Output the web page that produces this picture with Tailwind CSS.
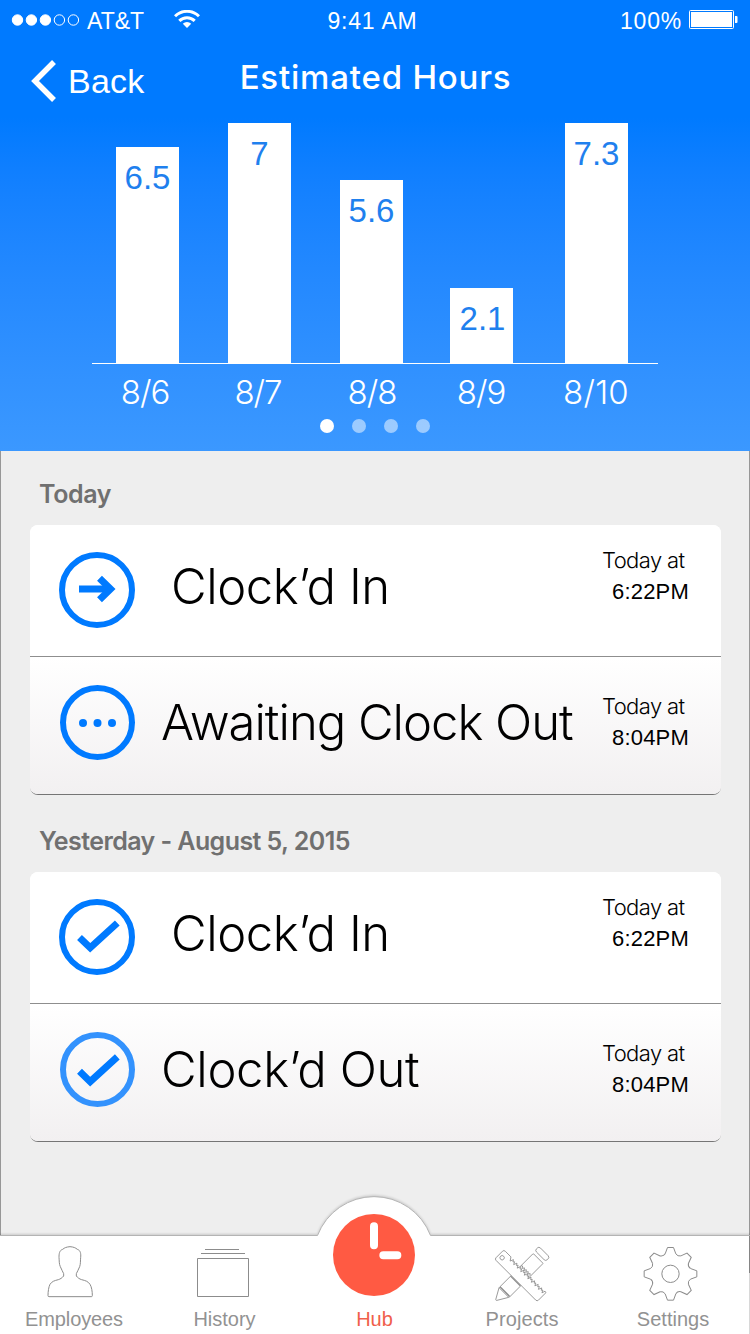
<!DOCTYPE html>
<html lang="en">
<head>
<meta charset="utf-8">
<title>Estimated Hours</title>
<script src="https://cdn.jsdelivr.net/npm/@tailwindcss/browser@4"></script>
</head>
<body class="w-[750px] h-[1334px] overflow-hidden bg-white font-['Liberation_Sans',Arial,sans-serif]">
<div class="relative flex h-[1334px] w-[750px] flex-col">

  <header class="flex h-[451px] shrink-0 flex-col bg-linear-to-b from-[#007aff] from-[26%] to-[#3b98ff] text-white">
    <!-- status bar -->
    <div class="grid h-10 grid-cols-3 items-center pt-[2px] text-[23px] leading-none">
      <div class="flex items-center pl-[11px]">
        <svg class="-mt-[2px] h-[14px] w-[69px]" viewBox="0 0 69 14" fill="#fff" stroke="#fff">
          <circle cx="6.5" cy="7" r="5.2"/><circle cx="20.4" cy="7" r="5.2"/><circle cx="34.4" cy="7" r="5.2"/>
          <circle cx="48.4" cy="7" r="5.2" fill="none"/><circle cx="62.4" cy="7" r="5.2" fill="none"/>
        </svg>
        <span class="ml-[7px]">AT&amp;T</span>
        <svg class="-mt-[4px] ml-[30px] h-[18px] w-[26px]" viewBox="0 0 26 18" fill="none" stroke="#fff" stroke-width="3">
          <path d="M1 6.3a17 17 0 0 1 24 0M5.3 10.9a10.8 10.8 0 0 1 15.4 0"/>
          <path d="M13 18l-4.2-4.2a6 6 0 0 1 8.400 0z" fill="#fff" stroke="none"/>
        </svg>
      </div>
      <div class="pr-[5px] text-center tracking-[0.8px]">9:41 AM</div>
      <div class="flex items-center justify-end pr-[12px]">
        <span class="tracking-[0.8px]">100%</span>
        <svg class="-mt-[3px] ml-[7px] h-[20px] w-[49px]" viewBox="0 0 49 20">
          <rect x=".5" y=".5" width="44" height="18" rx="1" fill="none" stroke="#fff"/>
          <rect x="2" y="2" width="41" height="15" fill="#fff"/>
          <path d="M46 6h1.5q1 0 1 1v5q0 1-1 1H46z" fill="#fff"/>
        </svg>
      </div>
    </div>

    <!-- navigation -->
    <div class="grid h-[82px] grid-cols-[230px_1fr_230px] items-center">
      <div class="flex items-center pl-[30px] text-[34px] leading-none">
        <svg class="h-[44px] w-[28px]" viewBox="0 0 28 44" fill="none" stroke="#fff" stroke-width="5.5"><path d="M24 3L5 22L24 41"/></svg>
        <span class="ml-[10px] tracking-[0.2px]">Back</span>
      </div>
      <h1 class="pb-2 pl-px text-center font-['Inter',sans-serif] text-[33px] leading-none font-medium tracking-[0.8px] whitespace-nowrap">Estimated Hours</h1>
    </div>

    <!-- chart -->
    <div class="mx-[92px] mt-px flex h-[241px] items-end border-b border-white pl-6 text-center text-[33px] leading-[61px] text-[#1f80ee]">
      <div class="h-[216px] w-[63px] bg-white">6.5</div>
      <div class="ml-[49px] h-[240px] w-[63px] bg-white">7</div>
      <div class="ml-[49px] h-[183px] w-[63px] bg-white">5.6</div>
      <div class="ml-[47px] h-[75px] w-[63px] bg-white pl-[2px]">2.1</div>
      <div class="ml-[52px] h-[240px] w-[63px] bg-white">7.3</div>
    </div>
    <div class="flex h-[55px] pl-[105px] text-center font-['Inter',sans-serif] text-[33px] leading-[57px] font-light tracking-[-1px]">
      <span class="w-[80px]">8/6</span>
      <span class="ml-[32px] w-[82px]">8/7</span>
      <span class="ml-[32px] w-[82px]">8/8</span>
      <span class="ml-[27px] w-[82px]">8/9</span>
      <span class="ml-[32px] w-[84px] tracking-[0.2px]">8/10</span>
    </div>
    <div class="flex justify-center gap-[18px]">
      <i class="size-[14px] rounded-full bg-white"></i>
      <i class="size-[14px] rounded-full bg-white/50"></i>
      <i class="size-[14px] rounded-full bg-white/50"></i>
      <i class="size-[14px] rounded-full bg-white/50"></i>
    </div>
  </header>

  <main class="flex h-[785px] shrink-0 flex-col border-x border-[#979797] bg-[#eee] pr-[28px] pl-[29px] text-black">
    <h2 class="flex h-[74px] items-center pt-[12px] pl-[9px] font-['Inter',sans-serif] text-[25px] leading-none font-semibold tracking-[-0.4px] text-[#707070]">Today</h2>
    <section class="flex h-[270px] flex-col overflow-hidden rounded-[8px] border-b border-[#757575] bg-white">
      <div class="flex h-[132px] items-start border-b border-[#8e8e8e] bg-white pl-[29px]">
        <svg class="mt-[27px] size-[76px]" viewBox="0 0 76 76" fill="none" stroke="#007aff" stroke-width="6">
          <circle cx="38" cy="38" r="35"/><path d="M20 37H51" stroke-width="7"/><path d="M40.500 26.300L51.500 37L40.500 47.700" stroke-width="7"/>
        </svg>
        <span class="ml-[36px] pt-[32px] font-['Inter',sans-serif] text-[49px] leading-[60px] font-light tracking-[-0.45px]">Clock’d In</span>
        <div class="ml-auto w-[119px] pt-5 text-[22px] leading-[31px]">
          <div class="font-['Inter',sans-serif] font-light tracking-[-0.6px]">Today at</div>
          <div class="pl-[10px] tracking-[0.2px]">6:22PM</div>
        </div>
      </div>
      <div class="flex h-[137px] items-start bg-linear-to-b from-white to-[#f2f0f1] pl-[30px]">
        <svg class="mt-[28px] size-[75px]" viewBox="0 0 75 75" fill="none" stroke="#007aff" stroke-width="6">
          <circle cx="37.5" cy="37.5" r="34.5"/>
          <g fill="#007aff" stroke="none"><circle cx="23" cy="38" r="4"/><circle cx="37.5" cy="38" r="4"/><circle cx="52" cy="38" r="4"/></g>
        </svg>
        <span class="ml-[26px] pt-[36px] font-['Inter',sans-serif] text-[49px] leading-[60px] font-light tracking-[-1.02px]">Awaiting Clock Out</span>
        <div class="ml-auto w-[119px] pt-[34px] text-[22px] leading-[31px]">
          <div class="font-['Inter',sans-serif] font-light tracking-[-0.6px]">Today at</div>
          <div class="pl-[10px] tracking-[0.2px]">8:04PM</div>
        </div>
      </div>
    </section>

    <h2 class="flex h-[77px] items-center pt-[15px] pl-[9px] font-['Inter',sans-serif] text-[25px] leading-none font-semibold tracking-[-0.57px] text-[#707070]">Yesterday - August 5, 2015</h2>
    <section class="flex h-[270px] flex-col overflow-hidden rounded-[8px] border-b border-[#757575] bg-white">
      <div class="flex h-[132px] items-start border-b border-[#8e8e8e] bg-white pl-[29px]">
        <svg class="mt-[27px] size-[76px]" viewBox="0 0 76 76" fill="none" stroke="#007aff" stroke-width="6">
          <circle cx="38" cy="38" r="35"/><path d="M20.500 38.500L31.200 48.800L58.300 24" stroke-width="7"/>
        </svg>
        <span class="ml-[36px] pt-[32px] font-['Inter',sans-serif] text-[49px] leading-[60px] font-light tracking-[-0.45px]">Clock’d In</span>
        <div class="ml-auto w-[119px] pt-5 text-[22px] leading-[31px]">
          <div class="font-['Inter',sans-serif] font-light tracking-[-0.6px]">Today at</div>
          <div class="pl-[10px] tracking-[0.2px]">6:22PM</div>
        </div>
      </div>
      <div class="flex h-[137px] items-start bg-linear-to-b from-white to-[#f2f0f1] pl-[30px]">
        <svg class="mt-[28px] size-[75px]" viewBox="0 0 75 75" fill="none" stroke-width="6">
          <circle cx="37.5" cy="37.5" r="34.5" stroke="#3392fd"/><path d="M19.500 39.300L30.200 49.700L57.300 24.800" stroke="#007aff" stroke-width="7"/>
        </svg>
        <span class="ml-[26px] pt-[36px] font-['Inter',sans-serif] text-[49px] leading-[60px] font-light tracking-[-0.35px]">Clock’d Out</span>
        <div class="ml-auto w-[119px] pt-[34px] text-[22px] leading-[31px]">
          <div class="font-['Inter',sans-serif] font-light tracking-[-0.6px]">Today at</div>
          <div class="pl-[10px] tracking-[0.2px]">8:04PM</div>
        </div>
      </div>
    </section>
  </main>

  <!-- tab bar -->
  <nav class="relative flex h-[98px] shrink-0 text-center text-[20px] leading-[20px] text-[#929292]">
    <svg class="absolute -top-[50px] left-0 h-[148px] w-[750px]" viewBox="0 0 750 148">
      <path d="M-5 49.500H317.500A60.500 60.500 0 0 1 430.500 49.500H755V160H-5Z" fill="#fff" stroke="#b4b4b4" class="drop-shadow-[0_-1px_1px_rgba(0,0,0,0.15)]"/>
    </svg>
    <div class="absolute top-0 right-0 h-[37px] w-px bg-[#858585]"></div>
    <div class="absolute top-[37px] right-0 h-[61px] w-px bg-[#d8d8d8]"></div>

    <a class="relative w-[150px]">
      <svg class="mb-[5px] block h-[68px] w-[150px]" viewBox="0 168 450 204" fill="none" stroke="#8c8c8c" stroke-width="3">
        <path d="M210 200C199 201 194 203 188 208C178 211 177 222 177 232C178 242 177 252 181 260C184 268 188 274 191 281V288C186 294 181 297 175 299C163 302 156 304 150 313C146 321 144 334 144 347Q144 350 147 350H274Q277 350 277 347C277 334 275 321 270 313C264 304 257 302 245 299C238 297 233 293 229 288V281C232 274 236 268 239 260C242 252 241 242 242 232C243 222 242 211 232 208C226 203 221 201 210 200Z"/>
      </svg>
      <span class="-ml-[2px] tracking-[-0.1px]">Employees</span>
    </a>
    <a class="relative w-[150px]">
      <svg class="mb-[5px] block h-[68px] w-[150px]" viewBox="450 168 450 204" fill="none" stroke="#8c8c8c" stroke-width="3">
        <path d="M615 208.500H717M603 220.500H735M592.500 235.500H745.500V349.500H592.500Z"/>
      </svg>
      <span class="-ml-px">History</span>
    </a>
    <a class="relative w-[150px] text-[#f0604b]">
      <svg class="mb-[5px] block h-[68px] w-[150px] overflow-visible" viewBox="30 168 450 204">
        <circle cx="252" cy="225" r="123" fill="#ff5a43"/>
        <path d="M252 138.500V195.500M280 225.500H322" stroke="#fff" stroke-width="24" stroke-linecap="round"/>
      </svg>
      <span class="-ml-px">Hub</span>
    </a>
    <a class="relative w-[144px]">
      <svg class="mb-[5px] block h-[68px] w-[144px]" viewBox="0 168 432 204" fill="none" stroke="#8c8c8c" stroke-width="2.500">
        <g transform="translate(211.500 287) rotate(-45)">
          <rect x="-71" y="-20" width="145" height="42" rx="2"/>
          <path d="M-71 -20L-103 -2Q-105 0 -103 2L-71 21"/>
          <path d="M-67 -20V21" stroke-width="4"/>
          <rect x="84" y="-23" width="17" height="46" rx="7"/>
        </g>
        <g transform="translate(211.500 287) rotate(45)">
          <path d="M-60 -19.500H-84Q-90 -19.500 -90 -14V14Q-90 19.500 -84 19.500H84Q90 19.500 90 14V-17Q89 -20 85 -19L82 -9L78 -17L75 -13L71 -19L67 -9L63 -17L60 -13L56 -19L52 -9L48 -17L45 -13L41 -19L37 -9L33 -17L30 -13L26 -19L22 -9L18 -17L15 -13L11 -19L7 -9L3 -17L0 -13L-4 -19L-8 -9L-12 -17L-15 -13L-19 -19L-23 -9L-27 -17L-30 -13L-34 -19L-38 -9L-42 -17L-45 -13L-49 -19L-53 -9Z" fill="#fff"/>
          <path d="M-20 22H21" stroke-width="4"/>
          <path d="M-20 -22L-16 -25L-12 -19L-8 -25L-4 -19L0 -25L4 -19L8 -25L12 -19L16 -25L20 -20"/>
          <circle cx="-77" cy="1" r="6.500"/>
        </g>
      </svg>
      <span class="tracking-[0.1px]">Projects</span>
    </a>
    <a class="relative w-[156px]">
      <svg class="mb-[5px] block h-[68px] w-[156px]" viewBox="432 168 468 204" fill="none" stroke="#8c8c8c" stroke-width="3">
        <g transform="translate(661.500 281.500)">
          <circle r="26"/>
          <path id="tooth" d="M-16 -60L-9 -79H9L16 -60Q21.400 -51.700 31.100 -53.700"/>
          <use href="#tooth" transform="rotate(45)"/><use href="#tooth" transform="rotate(90)"/><use href="#tooth" transform="rotate(135)"/>
          <use href="#tooth" transform="rotate(180)"/><use href="#tooth" transform="rotate(225)"/><use href="#tooth" transform="rotate(270)"/><use href="#tooth" transform="rotate(315)"/>
        </g>
      </svg>
      <span class="ml-[2px]">Settings</span>
    </a>
  </nav>
</div>
</body>
</html>
